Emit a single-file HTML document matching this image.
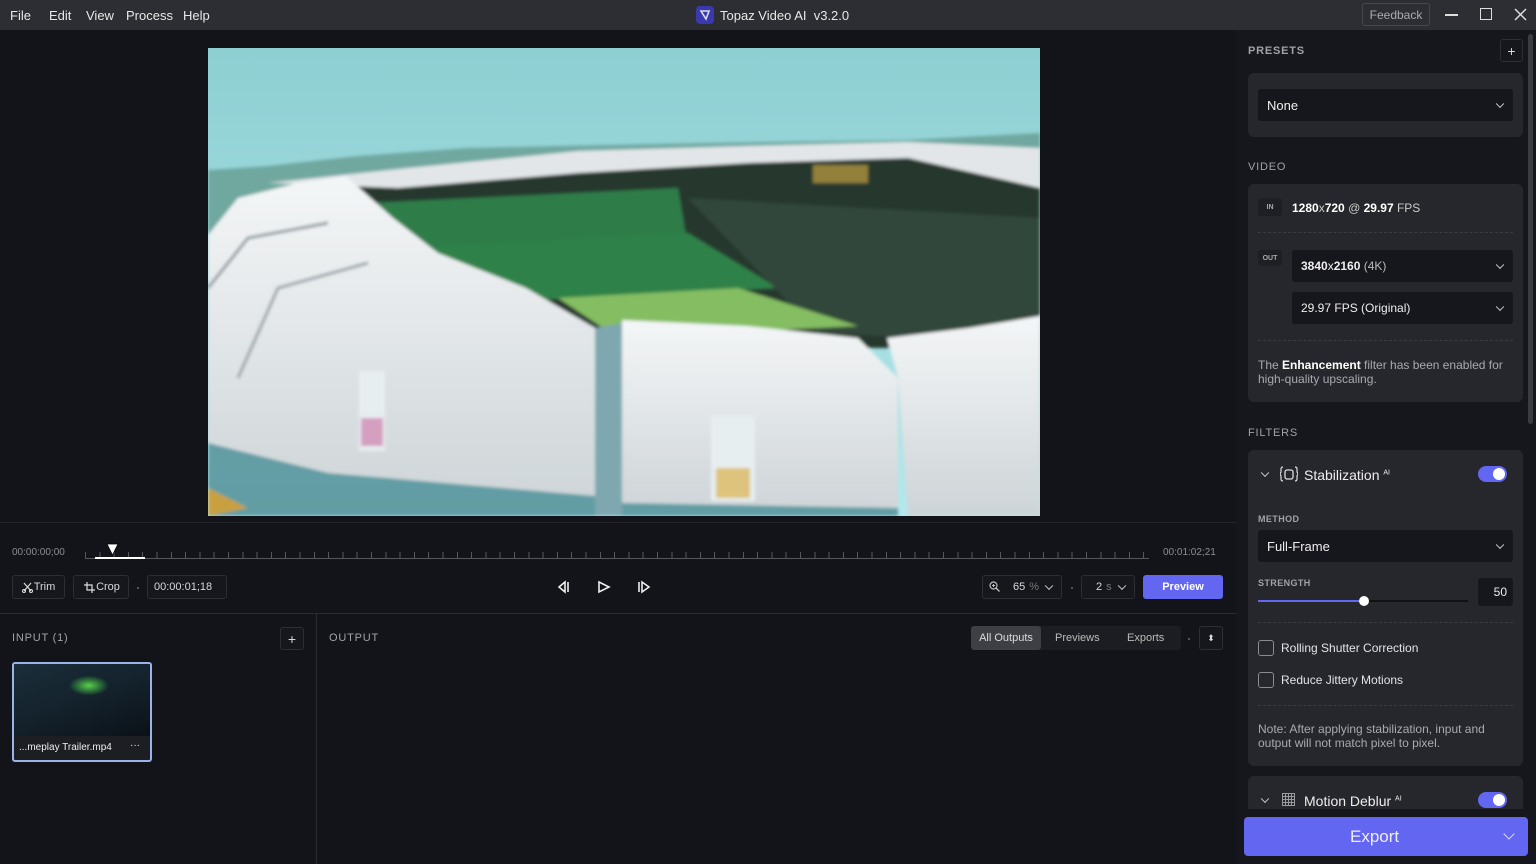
<!DOCTYPE html>
<html><head><meta charset="utf-8"><style>
*{box-sizing:border-box;margin:0;padding:0}
body{width:1536px;height:864px;overflow:hidden;background:#131419;font-family:"Liberation Sans",sans-serif;color:#d8d9dd;position:relative}
.a{position:absolute}
.btn{position:absolute;border:1px solid #2c2e34;border-radius:3px;background:#16171c;font-size:11px;color:#d8d9dd;display:flex;align-items:center;justify-content:center}
.lbl{position:absolute;font-size:11px;letter-spacing:.8px;color:#a0a2a8}
.card{position:absolute;background:#26272c;border-radius:6px}
.sel{position:absolute;background:#16171c;border-radius:3px;font-size:13px;color:#eee;display:flex;align-items:center;padding-left:9px}
.chev{position:absolute;right:10px;top:50%;width:6px;height:6px;border-right:1.3px solid #ccc;border-bottom:1.3px solid #ccc;transform:translateY(-70%) rotate(45deg)}
.tog{position:absolute;width:29px;height:16px;border-radius:8px;background:#6366f1}
.tog::after{content:"";position:absolute;right:2px;top:2px;width:12px;height:12px;border-radius:50%;background:#fff}
.cb{position:absolute;width:16px;height:16px;border:1px solid #8a8c92;border-radius:3px}
.dash{position:absolute;height:0;border-top:1px dashed #3a3c42}
.m{position:absolute;top:8px;font-size:13px;color:#e8e8e8}
</style></head><body>
<!-- title bar -->
<div class="a" style="left:0;top:0;width:1536px;height:30px;background:#2c2e33"></div>
<div class="m" style="left:10px">File</div><div class="m" style="left:49px">Edit</div><div class="m" style="left:86px">View</div><div class="m" style="left:126px">Process</div><div class="m" style="left:183px">Help</div>
<div class="a" style="left:696px;top:6px;width:18px;height:18px;border-radius:4px;background:#3a3ab0"><svg width="18" height="18"><path d="M5 5 L13 5 L10 13 Z" fill="none" stroke="#ddd" stroke-width="1.6"/></svg></div>
<div class="a" style="left:720px;top:8px;font-size:13px;color:#e8e8e8">Topaz Video AI&nbsp; v3.2.0</div>
<div class="btn" style="left:1362px;top:3px;width:68px;height:23px;background:#2c2e33;border-color:#45474d;color:#a8aab0;font-size:12px">Feedback</div>
<div class="a" style="left:1445px;top:14px;width:13px;height:1.5px;background:#ddd"></div>
<div class="a" style="left:1480px;top:8px;width:12px;height:12px;border:1.5px solid #ddd"></div>
<svg class="a" style="left:1514px;top:8px" width="13" height="13"><path d="M1 1L12 12M12 1L1 12" stroke="#ddd" stroke-width="1.5"/></svg>

<!-- video -->
<svg class="a" style="left:208px;top:48px" width="832" height="468" viewBox="0 0 832 468">
<defs><linearGradient id="sk" x1="0" y1="0" x2="0" y2="1"><stop offset="0" stop-color="#8dcfd2"/><stop offset="1" stop-color="#b4e8ec"/></linearGradient>
<linearGradient id="wh" x1="0" y1="0" x2="0" y2="1"><stop offset="0" stop-color="#f4f6f7"/><stop offset="1" stop-color="#cdd4d7"/></linearGradient>
<filter id="bl"><feGaussianBlur stdDeviation="1.5"/></filter></defs>
<rect width="832" height="468" fill="url(#sk)"/>
<g filter="url(#bl)">
<path d="M0 122 L60 118 L150 108 L260 100 L350 98 L450 96 L560 94 L700 92 L832 85 L832 200 L0 200Z" fill="#6fa8a0"/>
<path d="M130 140 L400 112 L600 100 L832 115 L832 300 L130 300Z" fill="#26372f"/>
<path d="M160 155 L470 140 L480 200 L190 215Z" fill="#2f7d48"/>
<path d="M220 200 L480 185 L570 240 L330 252Z" fill="#2f8248"/>
<path d="M480 150 L832 170 L832 295 L610 285Z" fill="#33473a"/>
<path d="M350 250 L530 240 L650 278 L410 290Z" fill="#84bd62"/>
<path d="M60 135 L200 120 L370 103 L540 98 L700 94 L832 100 L832 140 L700 110 L540 115 L370 125 L190 140Z" fill="#e2e6e8"/>
<path d="M0 187 L30 150 L90 135 L138 128 L185 170 L230 205 L318 240 L387 280 L387 468 L0 468Z" fill="url(#wh)"/>
<path d="M0 240 L40 190 L120 175" fill="none" stroke="#8e989c" stroke-width="3"/>
<path d="M30 330 L70 240 L160 215" fill="none" stroke="#9aa4a8" stroke-width="3"/>
<path d="M387 280 L415 275 L415 468 L387 468Z" fill="#7ea7b0"/>
<path d="M414 272 L540 278 L650 290 L690 330 L690 468 L414 468Z" fill="url(#wh)"/>
<path d="M679 290 L760 280 L832 268 L832 468 L700 468 L690 330Z" fill="url(#wh)"/>
<path d="M0 395 L120 425 L387 448 L387 468 L0 468Z" fill="#3d8a93" opacity=".75"/>
<path d="M414 455 L690 460 L690 468 L414 468Z" fill="#3d8a93" opacity=".75"/>
<rect x="503" y="368" width="44" height="85" fill="#e7eef0"/><rect x="508" y="420" width="34" height="30" fill="#d9b04a" opacity=".7"/>
<rect x="151" y="323" width="26" height="80" fill="#e7eef0"/><rect x="153" y="370" width="22" height="28" fill="#c86aa0" opacity=".6"/>
<rect x="605" y="117" width="55" height="18" fill="#c0a040" opacity=".7"/>
<path d="M0 440 L40 460 L0 468Z" fill="#c9a040"/>
</g>
</svg>

<!-- timeline -->
<div class="a" style="left:0;top:522px;width:1236px;height:1px;background:#24262b"></div>
<div class="a" style="left:12px;top:547px;font-size:10px;color:#8c8e94">00:00:00;00</div>
<div class="a" style="left:1163px;top:547px;font-size:10px;color:#8c8e94">00:01:02;21</div>
<div class="a" style="left:85px;top:558px;width:1064px;height:1px;background:#55575d"></div>
<div class="a" style="left:85px;top:552px;width:1064px;height:6px;background:repeating-linear-gradient(90deg,#55575d 0 1px,transparent 1px 14.3px)"></div>
<div class="a" style="left:95px;top:557px;width:50px;height:2px;background:#fff"></div>
<svg class="a" style="left:106px;top:543px" width="13" height="13"><path d="M1 1H12L6.5 12Z" fill="#fff" stroke="#000" stroke-width=".8"/></svg>
<div class="btn" style="left:12px;top:575px;width:53px;height:24px;padding-left:12px"><svg class="a" style="left:9px;top:6px" width="11" height="11"><path d="M2 1L9 9M9 1L2 9" stroke="#ddd" stroke-width="1.2"/><circle cx="2" cy="9" r="1.5" fill="none" stroke="#ddd"/><circle cx="9" cy="9" r="1.5" fill="none" stroke="#ddd"/></svg>Trim</div>
<div class="btn" style="left:73px;top:575px;width:56px;height:24px;padding-left:14px"><svg class="a" style="left:10px;top:6px" width="11" height="11"><path d="M3 0V8H11M0 3H8V11" fill="none" stroke="#ddd" stroke-width="1.2"/></svg>Crop</div>
<div class="a" style="left:137px;top:587px;width:2px;height:2px;background:#555"></div>
<div class="btn" style="left:147px;top:575px;width:80px;height:24px;justify-content:flex-start;padding-left:6px">00:00:01;18</div>
<svg class="a" style="left:556px;top:579px" width="100" height="16"><path d="M9 3L3 8L9 13Z" fill="none" stroke="#eee" stroke-width="1.6"/><path d="M12 3V13" stroke="#eee" stroke-width="1.6"/><path d="M43 3L53 8L43 13Z" fill="none" stroke="#eee" stroke-width="1.6"/><path d="M83 3V13" stroke="#eee" stroke-width="1.6"/><path d="M86 3L93 8L86 13Z" fill="none" stroke="#eee" stroke-width="1.6"/></svg>
<div class="btn" style="left:982px;top:575px;width:80px;height:24px;justify-content:flex-start;padding-left:30px">65 <span style="color:#777;margin-left:4px">%</span></div>
<svg class="a" style="left:989px;top:581px" width="11" height="11"><circle cx="4.5" cy="4.5" r="3.5" fill="none" stroke="#bbb" stroke-width="1.2"/><path d="M7 7L10.5 10.5" stroke="#bbb" stroke-width="1.3"/><path d="M3 4.5H6M4.5 3V6" stroke="#bbb"/></svg>
<div class="chev" style="left:1046px;top:587px;right:auto"></div>
<div class="a" style="left:1071px;top:587px;width:2px;height:2px;background:#555"></div>
<div class="btn" style="left:1081px;top:575px;width:54px;height:24px;justify-content:flex-start;padding-left:14px">2 <span style="color:#777;margin-left:4px">s</span></div>
<div class="chev" style="left:1119px;top:587px;right:auto"></div>
<div class="btn" style="left:1143px;top:575px;width:80px;height:24px;background:#6366f1;border:none;color:#fff;font-weight:bold">Preview</div>

<!-- bottom panels -->
<div class="a" style="left:0;top:613px;width:1236px;height:1px;background:#2a2c31"></div>
<div class="a" style="left:316px;top:613px;width:1px;height:251px;background:#2a2c31"></div>
<div class="lbl" style="left:12px;top:632px">INPUT (1)</div>
<div class="btn" style="left:280px;top:627px;width:24px;height:23px;font-size:14px">+</div>
<div class="lbl" style="left:329px;top:632px">OUTPUT</div>
<div class="a" style="left:971px;top:626px;width:210px;height:24px;background:#1c1d22;border-radius:3px"></div>
<div class="a" style="left:971px;top:626px;width:70px;height:24px;background:#3d3f45;border-radius:3px;font-size:11px;color:#ddd;display:flex;align-items:center;justify-content:center">All Outputs</div>
<div class="a" style="left:1055px;top:632px;font-size:11px;color:#bbb">Previews</div>
<div class="a" style="left:1127px;top:632px;font-size:11px;color:#bbb">Exports</div>
<div class="a" style="left:1188px;top:638px;width:2px;height:2px;background:#555"></div>
<div class="btn" style="left:1199px;top:626px;width:24px;height:24px;font-size:9px">⬍</div>
<div class="a" style="left:12px;top:662px;width:140px;height:100px;border:2px solid #9bb4e8;border-radius:3px;background:#1d1e23;overflow:hidden">
<div style="height:72px;background:radial-gradient(ellipse 20px 10px at 55% 30%,#5bd04a 0,#2a6a3a 60%,transparent 100%),linear-gradient(160deg,#1a2e3a 0,#14222c 50%,#0b1118 100%)"></div>
<div style="position:absolute;left:5px;top:78px;font-size:10px;color:#eee">...meplay Trailer.mp4</div>
<div style="position:absolute;right:10px;top:76px;font-size:10px;color:#eee">···</div></div>

<!-- sidebar -->
<div class="a" style="left:1236px;top:30px;width:300px;height:834px;background:#16171c"></div>
<div class="a" style="left:1528px;top:34px;width:5px;height:390px;border-radius:3px;background:#3a3c42"></div>
<div class="lbl" style="left:1248px;top:45px;font-weight:bold">PRESETS</div>
<div class="btn" style="left:1500px;top:39px;width:23px;height:23px;font-size:14px">+</div>
<div class="card" style="left:1248px;top:73px;width:275px;height:64px"></div>
<div class="sel" style="left:1258px;top:89px;width:255px;height:32px">None<span class="chev"></span></div>
<div class="lbl" style="left:1248px;top:161px">VIDEO</div>
<div class="card" style="left:1248px;top:184px;width:275px;height:218px"></div>
<div class="a" style="left:1258px;top:198px;width:24px;height:18px;border-radius:3px;background:#1e1f24;font-size:7px;color:#aaa;display:flex;align-items:center;justify-content:center;font-weight:bold">IN</div>
<div class="a" style="left:1292px;top:201px;font-size:12px;color:#ccc"><b style="color:#fff">1280</b>x<b style="color:#fff">720</b> @ <b style="color:#fff">29.97</b> FPS</div>
<div class="dash" style="left:1258px;top:232px;width:255px"></div>
<div class="a" style="left:1258px;top:250px;width:24px;height:16px;border-radius:3px;background:#1e1f24;font-size:7px;color:#aaa;display:flex;align-items:center;justify-content:center;font-weight:bold">OUT</div>
<div class="sel" style="left:1292px;top:250px;width:221px;height:32px;font-size:12px"><b>3840</b>x<b>2160</b>&nbsp;<span style="color:#bbb">(4K)</span><span class="chev"></span></div>
<div class="sel" style="left:1292px;top:292px;width:221px;height:32px;font-size:12px">29.97 FPS (Original)<span class="chev"></span></div>
<div class="dash" style="left:1258px;top:340px;width:255px"></div>
<div class="a" style="left:1258px;top:358px;width:260px;font-size:12px;line-height:14px;color:#a8aab0">The <b style="color:#fff">Enhancement</b> filter has been enabled for high-quality upscaling.</div>
<div class="lbl" style="left:1248px;top:427px">FILTERS</div>
<div class="card" style="left:1248px;top:450px;width:275px;height:316px"></div>
<div class="chev" style="left:1262px;top:474px;right:auto"></div>
<svg class="a" style="left:1280px;top:466px" width="18" height="16"><path d="M3 1Q1 1 1 3V6L0 8L1 10V13Q1 15 3 15M15 1Q17 1 17 3V6L18 8L17 10V13Q17 15 15 15" fill="none" stroke="#ddd" stroke-width="1.2"/><rect x="5" y="4" width="8" height="9" rx="2" fill="none" stroke="#ddd" stroke-width="1.3"/></svg>
<div class="a" style="left:1304px;top:467px;font-size:14px;color:#eee">Stabilization <sup style="font-size:7px">AI</sup></div>
<div class="tog" style="left:1478px;top:466px"></div>
<div class="lbl" style="left:1258px;top:514px;font-size:9px;font-weight:bold;letter-spacing:.4px">METHOD</div>
<div class="sel" style="left:1258px;top:530px;width:255px;height:32px">Full-Frame<span class="chev"></span></div>
<div class="lbl" style="left:1258px;top:578px;font-size:9px;font-weight:bold;letter-spacing:.4px">STRENGTH</div>
<div class="a" style="left:1258px;top:600px;width:210px;height:2px;background:#111"></div>
<div class="a" style="left:1258px;top:600px;width:106px;height:2px;background:#6366f1"></div>
<div class="a" style="left:1359px;top:596px;width:10px;height:10px;border-radius:50%;background:#fff"></div>
<div class="sel" style="left:1478px;top:578px;width:35px;height:28px;padding:0 6px;justify-content:flex-end;font-size:12px">50</div>
<div class="dash" style="left:1258px;top:622px;width:255px"></div>
<div class="cb" style="left:1258px;top:640px"></div>
<div class="a" style="left:1281px;top:641px;font-size:12px;color:#e4e4e4">Rolling Shutter Correction</div>
<div class="cb" style="left:1258px;top:672px"></div>
<div class="a" style="left:1281px;top:673px;font-size:12px;color:#e4e4e4">Reduce Jittery Motions</div>
<div class="dash" style="left:1258px;top:705px;width:255px"></div>
<div class="a" style="left:1258px;top:722px;width:260px;font-size:12px;line-height:14px;color:#a8aab0">Note: After applying stabilization, input and output will not match pixel to pixel.</div>
<div class="card" style="left:1248px;top:776px;width:275px;height:40px;border-radius:6px 6px 0 0"></div>
<div class="chev" style="left:1262px;top:800px;right:auto"></div>
<div class="a" style="left:1282px;top:793px;width:13px;height:13px;background:repeating-linear-gradient(90deg,#ccc 0 1px,transparent 1px 3px),repeating-linear-gradient(0deg,#ccc 0 1px,transparent 1px 3px);opacity:.7"></div>
<div class="a" style="left:1304px;top:793px;font-size:14px;color:#eee">Motion Deblur <sup style="font-size:7px">AI</sup></div>
<div class="tog" style="left:1478px;top:792px"></div>
<div class="a" style="left:1236px;top:809px;width:300px;height:55px;background:#16171c"></div>
<div class="a" style="left:1244px;top:817px;width:284px;height:39px;background:#6366f1;border-radius:4px;font-size:17px;color:#eef;display:flex;align-items:center;padding-left:106px">Export</div>
<div class="a" style="left:1505px;top:830px;width:8px;height:8px;border-right:1.5px solid #dde;border-bottom:1.5px solid #dde;transform:rotate(45deg)"></div>
</body></html>
